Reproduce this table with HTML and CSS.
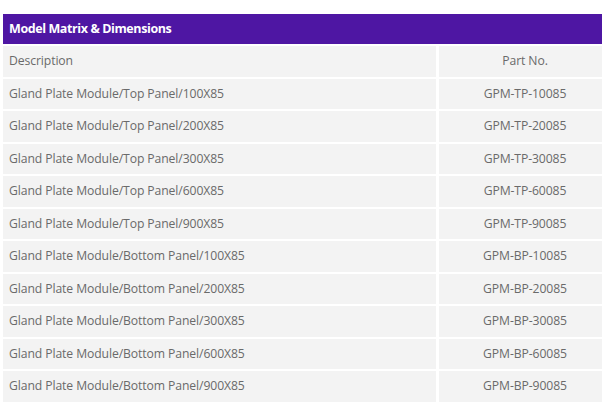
FILE: index.html
```html
<!DOCTYPE html>
<html>
<head>
<meta charset="utf-8">
<link rel="stylesheet" href="styles.css">
</head>
<body>
<div class="matrix">
  <div class="title">Model Matrix &amp; Dimensions</div>
  <div class="grid">
    <div class="cell">Description</div><div class="cell num">Part No.</div>
    <div class="cell">Gland Plate Module/Top Panel/100X85</div><div class="cell num">GPM-TP-10085</div>
    <div class="cell">Gland Plate Module/Top Panel/200X85</div><div class="cell num">GPM-TP-20085</div>
    <div class="cell">Gland Plate Module/Top Panel/300X85</div><div class="cell num">GPM-TP-30085</div>
    <div class="cell">Gland Plate Module/Top Panel/600X85</div><div class="cell num">GPM-TP-60085</div>
    <div class="cell">Gland Plate Module/Top Panel/900X85</div><div class="cell num">GPM-TP-90085</div>
    <div class="cell">Gland Plate Module/Bottom Panel/100X85</div><div class="cell num">GPM-BP-10085</div>
    <div class="cell">Gland Plate Module/Bottom Panel/200X85</div><div class="cell num">GPM-BP-20085</div>
    <div class="cell">Gland Plate Module/Bottom Panel/300X85</div><div class="cell num">GPM-BP-30085</div>
    <div class="cell">Gland Plate Module/Bottom Panel/600X85</div><div class="cell num">GPM-BP-60085</div>
    <div class="cell">Gland Plate Module/Bottom Panel/900X85</div><div class="cell num">GPM-BP-90085</div>
  </div>
</div>
</body>
</html>
```
FILE: styles.css
```css
html, body {
  margin: 0;
  padding: 0;
  background: #ffffff;
}
body {
  font-family: "Open Sans", "Liberation Sans", sans-serif;
  overflow: hidden;
}
.matrix {
  margin: 14px 0 0 3px;
  width: 599px;
}
.title {
  background: #4e16a3;
  color: #ffffff;
  font-weight: 700;
  font-size: 12.5px;
  letter-spacing: -0.4px;
  height: 30px;
  line-height: 30px;
  padding-left: 6px;
  margin-bottom: 2px;
}
.grid {
  display: grid;
  grid-template-columns: 433px 163px;
  column-gap: 3px;
  row-gap: 2px;
}
.cell {
  background: #f3f3f3;
  color: #6a6a6a;
  font-size: 12.2px;
  letter-spacing: -0.1px;
  height: 30.5px;
  line-height: 30.5px;
  padding-left: 6px;
  white-space: nowrap;
}
.cell.num {
  text-align: center;
  padding-left: 9px;
}
```
